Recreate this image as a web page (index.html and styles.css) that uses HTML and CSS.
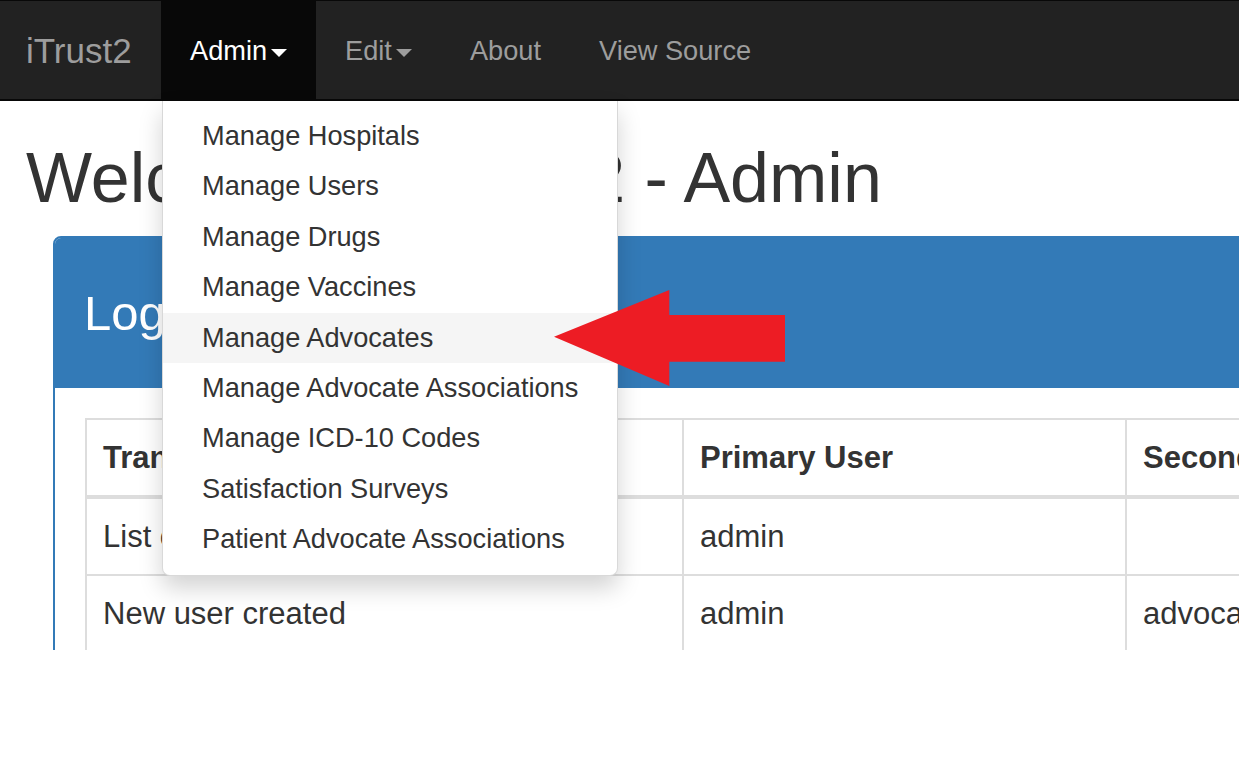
FILE: index.html
```html
<!DOCTYPE html>
<html lang="en">
<head>
<meta charset="utf-8">
<title>iTrust2 - Admin</title>
<link rel="stylesheet" href="styles.css">
</head>
<body>
<div class="page">
  <nav class="navbar">
    <a class="brand" href="#">iTrust2</a>
    <ul class="nav">
      <li class="nav-item active"><a href="#">Admin<span class="caret"></span></a>
        <ul class="dropdown">
          <li><a href="#">Manage Hospitals</a></li>
          <li><a href="#">Manage Users</a></li>
          <li><a href="#">Manage Drugs</a></li>
          <li><a href="#">Manage Vaccines</a></li>
          <li class="hover"><a href="#">Manage Advocates</a></li>
          <li><a href="#">Manage Advocate Associations</a></li>
          <li><a href="#">Manage ICD-10 Codes</a></li>
          <li><a href="#">Satisfaction Surveys</a></li>
          <li><a href="#">Patient Advocate Associations</a></li>
        </ul>
      </li>
      <li class="nav-item"><a href="#">Edit<span class="caret"></span></a></li>
      <li class="nav-item"><a href="#">About</a></li>
      <li class="nav-item"><a href="#">View Source</a></li>
    </ul>
  </nav>
  <main class="main">
    <h1 class="title">Welcome to iTrust2 - Admin</h1>
    <section class="panel">
      <div class="panel-heading">Logs</div>
      <div class="panel-body">
        <table class="log-table">
          <colgroup>
            <col class="c1"><col class="c2"><col class="c3">
          </colgroup>
          <thead>
            <tr><th>Transaction Type</th><th>Primary User</th><th>Secondary User</th></tr>
          </thead>
          <tbody>
            <tr><td>List of users viewed</td><td>admin</td><td></td></tr>
            <tr><td>New user created</td><td>admin</td><td>advocate</td></tr>
          </tbody>
        </table>
      </div>
    </section>
  </main>
  <svg class="arrow" width="232" height="96" viewBox="0 0 232 96" aria-hidden="true">
    <polygon points="0,46.7 115.3,0 115.3,25 231,25 231,71.7 115.3,71.7 115.3,96" fill="#ed1c24"/>
  </svg>
</div>
</body>
</html>
```

FILE: styles.css
```css
html, body {
  margin: 0;
  padding: 0;
  background: #fff;
  overflow: hidden;
}
body {
  font-family: "Liberation Sans", Arial, Helvetica, sans-serif;
  color: #333;
}
.page {
  position: relative;
  height: 767px;
  overflow: hidden;
}
.navbar {
  display: flex;
  align-items: stretch;
  height: 98px;
  background: #222;
  border-top: 1px solid #080808;
  border-bottom: 2px solid #080808;
}
.brand {
  box-sizing: border-box;
  width: 161px;
  padding-left: 26px;
  font-size: 35px;
  line-height: 100px;
  color: #9d9d9d;
  text-decoration: none;
}
.nav {
  display: flex;
  list-style: none;
  margin: 0;
  padding: 0;
}
.nav-item {
  position: relative;
}
.nav-item > a {
  display: block;
  padding: 30px 29px 28px;
  line-height: 40px;
  font-size: 27.2px;
  color: #9d9d9d;
  text-decoration: none;
}
.nav-item.active > a {
  background: #080808;
  color: #fff;
}
.caret {
  display: inline-block;
  width: 0;
  height: 0;
  margin-left: 4px;
  vertical-align: middle;
  border-top: 8px solid;
  border-left: 8px solid transparent;
  border-right: 8px solid transparent;
}
.dropdown {
  position: absolute;
  top: 100px;
  left: 1px;
  z-index: 10;
  margin: 0;
  padding: 10px 0;
  list-style: none;
  background: #fff;
  border: 1px solid rgba(0, 0, 0, 0.15);
  border-top: 0;
  border-radius: 0 0 8px 8px;
  box-shadow: 0 12px 23px rgba(0, 0, 0, 0.175);
  white-space: nowrap;
}
.dropdown a {
  display: block;
  padding: 6px 39px;
  line-height: 38.4px;
  font-size: 27.2px;
  color: #333;
  text-decoration: none;
}
.dropdown .hover a {
  background: #f5f5f5;
}
.main {
  height: 549px;
  padding: 0 26px;
  overflow: hidden;
}
.title {
  margin: 39px 0 19px;
  font-size: 70px;
  line-height: 77px;
  font-weight: normal;
  color: #333;
}
.panel {
  width: 1700px;
  margin-left: 27px;
  border: 2px solid #337ab7;
  border-radius: 8px;
  background: #fff;
}
.panel-heading {
  height: 40px;
  padding: 55px 29px 55px;
  background: #337ab7;
  color: #fff;
  font-size: 49px;
  line-height: 40px;
  border-radius: 6px 6px 0 0;
}
.panel-body {
  padding: 30px 30px;
}
.log-table {
  table-layout: fixed;
  width: 1600px;
  border-collapse: collapse;
  border: 2px solid #ddd;
  font-size: 31px;
  line-height: 43px;
  color: #333;
}
.log-table .c1 { width: 597px; }
.log-table .c2 { width: 443px; }
.log-table .c3 { width: 560px; }
.log-table th,
.log-table td {
  padding: 16px;
  text-align: left;
  border: 2px solid #ddd;
  vertical-align: top;
  white-space: nowrap;
  overflow: hidden;
}
.log-table th {
  font-weight: bold;
  border-bottom: 4px solid #ddd;
}
.arrow {
  position: absolute;
  left: 554px;
  top: 290px;
  z-index: 20;
}
```
